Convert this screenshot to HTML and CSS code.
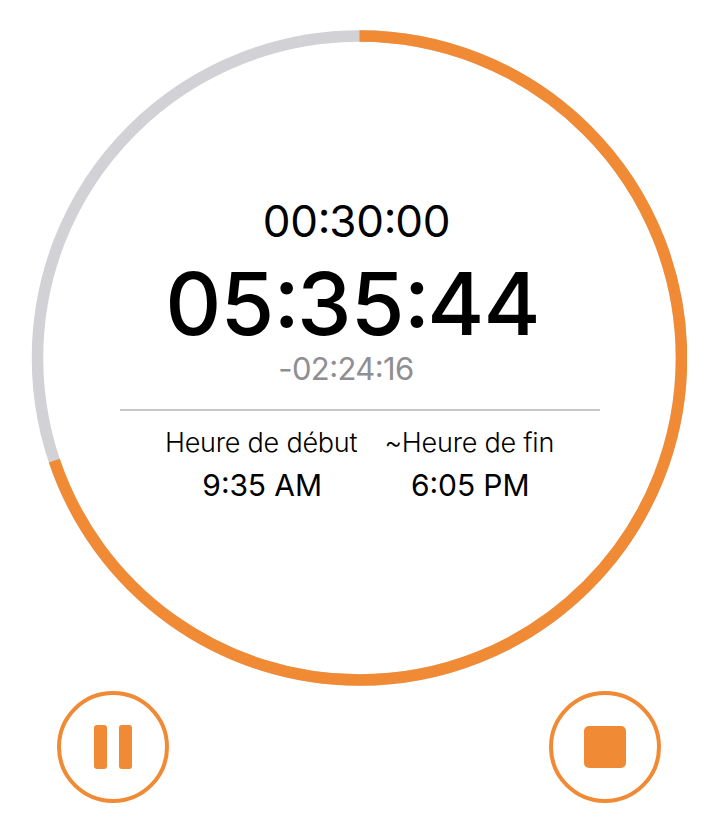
FILE: index.html
```html
<!DOCTYPE html>
<html lang="fr">
<head>
<meta charset="utf-8">
<title>Minuteur</title>
<link rel="stylesheet" href="styles.css">
</head>
<body>
<main class="timer">
  <section class="dial">
    <svg class="ring" viewBox="0 0 656 656" aria-hidden="true">
      <circle class="ring-track" cx="328.5" cy="328" r="322"/>
      <circle class="ring-progress" cx="328.5" cy="328" r="322" pathLength="1000" stroke-dasharray="698.3 1000" transform="rotate(-90 328.5 328)"/>
    </svg>
    <div class="readout">
      <div class="pause-time">00<span class="colon">:</span>30<span class="colon">:</span>00</div>
      <div class="elapsed">05<span class="colon">:</span>35<span class="colon">:</span>44</div>
      <div class="remaining">-02<span class="colon">:</span>24<span class="colon">:</span>16</div>
      <hr class="divider">
      <div class="hours">
        <div class="hour"><span class="label">Heure de début</span><span class="value">9<span class="colon">:</span>35 AM</span></div>
        <div class="hour"><span class="label">~Heure de fin</span><span class="value">6<span class="colon">:</span>05 PM</span></div>
      </div>
    </div>
  </section>
  <div class="controls">
    <button class="control" aria-label="Pause"><span class="bar"></span><span class="bar"></span></button>
    <button class="control" aria-label="Stop"><span class="square"></span></button>
  </div>
</main>
</body>
</html>
```
FILE: styles.css
```css
* { box-sizing: border-box; }
body {
  margin: 0;
  background: #fff;
  color: #000;
  font-family: Inter, "Liberation Sans", sans-serif;
}
.timer {
  width: 718px;
  height: 834px;
  padding: 30px 31px 0;
  overflow: hidden;
}
.dial { display: grid; width: 656px; height: 656px; }
.ring, .readout { grid-area: 1 / 1; }
.ring { width: 656px; height: 656px; fill: none; stroke-width: 11.5; }
.ring-track { stroke: #d1d1d6; }
.ring-progress { stroke: #f08a34; }
.readout {
  display: flex;
  flex-direction: column;
  align-items: center;
  padding: 163px 0 0 1px;
  white-space: nowrap;
}
.colon { line-height: 0; vertical-align: 0.09em; }
.pause-time { margin-right: 6px; font-size: 44px; line-height: 56px; letter-spacing: -0.3px; }
.pause-time .colon { letter-spacing: -1px; }
.elapsed { margin-right: 14px; font-size: 87px; line-height: 92px; padding: 9px 0 7px; font-weight: 500; letter-spacing: -0.8px; }
.elapsed .colon { letter-spacing: -3px; }
.remaining { margin-right: 27px; font-size: 31px; line-height: 24px; letter-spacing: -0.6px; color: #8e8e93; }
.divider { width: 480px; height: 2px; margin: 28px 0 0; border: 0; background: #c8c8c8; }
.hours { display: flex; gap: 27px; margin-top: 11px; }
.hour { display: flex; flex-direction: column; align-items: center; }
.label { font-size: 27px; line-height: 42px; font-weight: 300; letter-spacing: -0.23px; }
.value { padding-left: 2px; font-size: 30px; line-height: 42px; letter-spacing: -0.1px; }
.controls { display: flex; justify-content: space-between; padding: 5px 26px 0; }
.control {
  display: flex;
  align-items: center;
  justify-content: center;
  gap: 12px;
  width: 112px;
  height: 112px;
  padding: 0;
  border: 4px solid #f08a34;
  border-radius: 50%;
  background: none;
}
.bar { width: 13px; height: 44px; border-radius: 3px; background: #f08a34; }
.square { width: 42px; height: 42px; border-radius: 5px; background: #f08a34; }
```
